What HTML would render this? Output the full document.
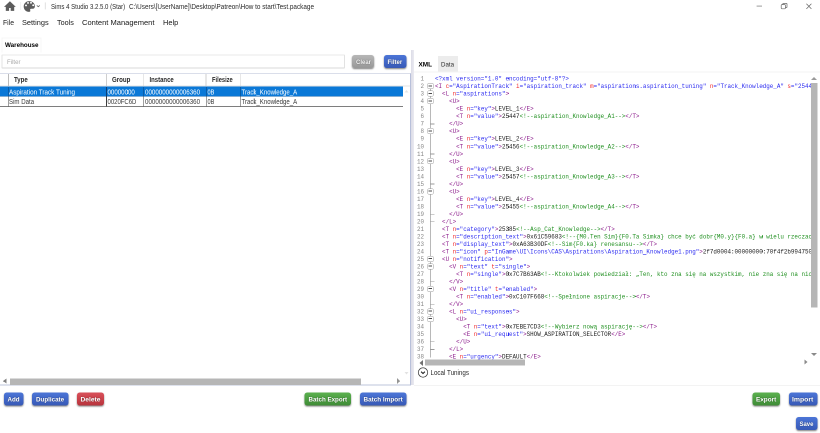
<!DOCTYPE html>
<html><head><meta charset="utf-8"><title>Sims 4 Studio</title>
<style>
*{box-sizing:border-box;margin:0;padding:0}
html,body{width:820px;height:433px;overflow:hidden;background:#fff}
body{font-family:"Liberation Sans",sans-serif;color:#111;position:relative;font-size:7px}
.abs{position:absolute;white-space:nowrap}
.tx{position:absolute;white-space:pre;transform-origin:0 0}
#o{position:absolute;left:0;top:0;width:1640px;height:866px;transform:scale(.5);transform-origin:0 0;will-change:transform;overflow:hidden;background:#fff}
#z{zoom:2;position:relative;width:820px;height:433px}
.inp{left:1.5px;top:54.5px;width:343.5px;height:14px;border:1px solid #e2e2e2;border-top-color:#e8e8e8;border-bottom-color:#d9d9d9;border-radius:1px;background:#fff}
.btn{position:absolute;height:13.2px;border-radius:2.6px;box-shadow:0 1px 1.6px rgba(0,0,0,.5)}
.blue{background:linear-gradient(#4c75d6,#3e63c4 65%,#3859b4);}
.green{background:linear-gradient(#5bb04f,#47983d 70%,#3f8a36);}
.red{background:linear-gradient(#d8505a,#c63d46 65%,#b5343d);}
.gray{background:linear-gradient(#b6b6b6,#a2a2a2 70%,#979797);}
.vl{position:absolute;width:1px}
.code{left:414px;top:75.18px;width:397px;height:284.52px;overflow:hidden;font-family:"Liberation Mono",monospace;font-size:5.877px;line-height:7.51px;color:#1a1a1a}
.ln{height:7.51px;position:relative;white-space:pre}
.no{position:absolute;left:0;width:10px;text-align:right;color:#858585;font-size:6.5px;transform:scaleX(.9);transform-origin:100% 0}
.cd{position:absolute;left:21px;font-size:6.6px;transform:scaleX(.8905);transform-origin:0 0}
.code b{font-weight:normal}
.d{color:#2a2af0}.t{color:#8b1a8b}.a{color:#f02828}.v{color:#2a2af0}.c{color:#1f8f1f}
.fb{position:absolute;left:427.4px;width:6px;height:6px;border:0.75px solid #989898;background:#fff;border-radius:1.2px}
.fb:after{content:"";position:absolute;left:0.6px;top:1.75px;width:3.3px;height:1px;background:#4a4a4a}
.tri{position:absolute;width:0;height:0}
</style></head><body><div id="o"><div id="z">

<!-- title bar icons -->
<svg class="abs" style="left:0;top:0" width="48" height="14" viewBox="0 0 48 14">
 <path d="M9.9 1.3 L4 6.9 L5.8 6.9 L5.8 10.9 L9.1 10.9 L9.1 8 L10.7 8 L10.7 10.9 L14.2 10.9 L14.2 6.9 L15.8 6.9 Z" fill="#5c5c5c"/>
 <path d="M29.2 1.1 C26.1 1.1 23.7 3.5 23.7 6.5 C23.7 9.6 26.1 11.9 28.9 11.9 C30.2 11.9 30.6 11.1 30.2 10.3 C29.8 9.4 30.3 8.7 31.3 8.7 L32.6 8.7 C34.1 8.7 34.9 7.7 34.9 6.2 C34.9 3.3 32.4 1.1 29.2 1.1 Z" fill="#5c5c5c"/>
 <circle cx="26" cy="5.4" r="0.95" fill="#fff"/><circle cx="28" cy="2.9" r="0.95" fill="#fff"/><circle cx="31" cy="2.8" r="0.95" fill="#fff"/><circle cx="33.2" cy="5.2" r="0.95" fill="#fff"/>
 <path d="M36.8 5.4 L38.3 6.7 L39.8 5.4" stroke="#666" stroke-width="0.8" fill="none"/>
 <path d="M20.7 2 V10" stroke="#eeeeee" stroke-width="0.8"/>
 <path d="M45.3 2.4 V9.4" stroke="#dcdcdc" stroke-width="0.9"/>
</svg>

<!-- window controls -->
<svg class="abs" style="left:750px;top:0" width="70" height="14" viewBox="0 0 70 14">
 <path d="M6.6 6.1 H12" stroke="#9a9a9a" stroke-width="1"/>
 <rect x="31.2" y="4.6" width="4.2" height="4.2" fill="none" stroke="#666" stroke-width="0.7" rx="0.8"/>
 <path d="M32.8 4.6 V3.9 Q32.8 3.4 33.4 3.4 H36.4 Q37 3.4 37 4 V7 Q37 7.6 36.4 7.6 H35.5" fill="none" stroke="#666" stroke-width="0.7"/>
 <path d="M56.4 3.7 L61.4 8.9 M61.4 3.7 L56.4 8.9" stroke="#666" stroke-width="0.7"/>
</svg>

<!-- warehouse tab outline -->
<div class="abs" style="left:1.5px;top:37.5px;width:40px;height:15px;border:1px solid #f6f6f6;border-bottom:none"></div>

<div class="abs inp"></div>
<div class="btn gray" style="left:352.2px;top:55px;width:22px"></div>
<div class="btn blue" style="left:384px;top:55px;width:22.6px"></div>

<!-- grid -->
<div class="abs" style="left:0;top:73px;width:411px;height:312.6px;border-top:1px solid #dadeea;border-right:1px solid #b8c0da;border-bottom:1px solid #bcc4da;background:#fff"></div>
<div class="abs" style="left:0;top:85.5px;width:410px;height:1px;background:#e2e2e2"></div>
<div class="vl" style="left:8.20px;top:74px;height:12px;width:0.8px;background:#bbbbbb"></div>
<div class="vl" style="left:106.10px;top:74px;height:12px;width:0.8px;background:#cfcfcf"></div>
<div class="vl" style="left:143.40px;top:74px;height:12px;width:0.8px;background:#cfcfcf"></div>
<div class="vl" style="left:205.70px;top:74px;height:12px;width:0.8px;background:#cfcfcf"></div>
<div class="vl" style="left:239.80px;top:74px;height:12px;width:0.8px;background:#cfcfcf"></div>
<div class="abs" style="left:0;top:86.3px;width:403px;height:10.2px;background:#0a78d7"></div>
<div class="abs" style="left:0;top:96.1px;width:403px;height:0.6px;background:#0b5ca8"></div>
<div class="abs" style="left:0;top:105.8px;width:403px;height:1.1px;background:#7e7e7e"></div>
<div class="vl" style="left:8.25px;top:87px;height:9.5px;width:0.7px;background:#0a3f78"></div>
<div class="vl" style="left:106.15px;top:87px;height:9.5px;width:0.7px;background:#0a3f78"></div>
<div class="vl" style="left:143.45px;top:87px;height:9.5px;width:0.7px;background:#0a3f78"></div>
<div class="vl" style="left:205.75px;top:87px;height:9.5px;width:0.7px;background:#0a3f78"></div>
<div class="vl" style="left:239.85px;top:87px;height:9.5px;width:0.7px;background:#0a3f78"></div>
<div class="vl" style="left:8.25px;top:96.5px;height:10px;width:0.7px;background:#3c3c3c"></div>
<div class="vl" style="left:106.15px;top:96.5px;height:10px;width:0.7px;background:#3c3c3c"></div>
<div class="vl" style="left:143.45px;top:96.5px;height:10px;width:0.7px;background:#3c3c3c"></div>
<div class="vl" style="left:205.75px;top:96.5px;height:10px;width:0.7px;background:#3c3c3c"></div>
<div class="vl" style="left:239.85px;top:96.5px;height:10px;width:0.7px;background:#3c3c3c"></div>
<div class="tri" style="left:404.5px;top:90px;border-left:2.3px solid transparent;border-right:2.3px solid transparent;border-bottom:2.6px solid #e4e4e4"></div>

<!-- left h scrollbar -->
<div class="abs" style="left:10.2px;top:378.3px;width:350.8px;height:6.5px;background:#b6b6b6"></div>
<div class="tri" style="left:2.8px;top:378.6px;border-top:2.9px solid transparent;border-bottom:2.9px solid transparent;border-right:3.5px solid #808080"></div>
<div class="tri" style="left:397px;top:378.1px;border-top:3.2px solid transparent;border-bottom:3.2px solid transparent;border-left:3.4px solid #959595"></div>
<div class="tri" style="left:404.3px;top:372px;border-left:2.4px solid transparent;border-right:2.4px solid transparent;border-top:2.8px solid #e2e2e2"></div>

<div class="btn blue" style="left:3.8px;top:392.3px;width:19.7px"></div>
<div class="btn blue" style="left:32.2px;top:392.3px;width:36.2px"></div>
<div class="btn red" style="left:77.1px;top:392.3px;width:26.9px"></div>
<div class="btn green" style="left:304.3px;top:392.3px;width:46.5px"></div>
<div class="btn blue" style="left:359.9px;top:392.3px;width:46.6px"></div>

<!-- splitter -->
<div class="abs" style="left:411.2px;top:50px;width:2.8px;height:335px;background:linear-gradient(90deg,#dcdce6,#eaeaf1)"></div>

<!-- tabs -->
<div class="abs" style="left:438px;top:56px;width:20px;height:15.5px;background:#ececec"></div>
<div class="abs" style="left:414px;top:71.3px;width:406px;height:1px;background:#f2f2f2"></div>

<!-- code -->
<div class="abs code"><div class="ln"><span class="no">1</span><span class="cd"><b class="d">&lt;?xml version=&quot;1.0&quot; encoding=&quot;utf-8&quot;?&gt;</b></span></div><div class="ln"><span class="no">2</span><span class="cd"><b class="t">&lt;I</b> <b class="a">c</b><b class="v">=&quot;AspirationTrack&quot;</b> <b class="a">i</b><b class="v">=&quot;aspiration_track&quot;</b> <b class="a">m</b><b class="v">=&quot;aspirations.aspiration_tuning&quot;</b> <b class="a">n</b><b class="v">=&quot;Track_Knowledge_A&quot;</b> <b class="a">s</b><b class="v">=&quot;25444&quot;</b><b class="t">&gt;</b></span></div><div class="ln"><span class="no">3</span><span class="cd">  <b class="t">&lt;L</b> <b class="a">n</b><b class="v">=&quot;aspirations&quot;</b><b class="t">&gt;</b></span></div><div class="ln"><span class="no">4</span><span class="cd">    <b class="t">&lt;U</b><b class="t">&gt;</b></span></div><div class="ln"><span class="no">5</span><span class="cd">      <b class="t">&lt;E</b> <b class="a">n</b><b class="v">=&quot;key&quot;</b><b class="t">&gt;</b>LEVEL_1<b class="t">&lt;/E</b><b class="t">&gt;</b></span></div><div class="ln"><span class="no">6</span><span class="cd">      <b class="t">&lt;T</b> <b class="a">n</b><b class="v">=&quot;value&quot;</b><b class="t">&gt;</b>25447<b class="c">&lt;!--aspiration_Knowledge_A1--&gt;</b><b class="t">&lt;/T</b><b class="t">&gt;</b></span></div><div class="ln"><span class="no">7</span><span class="cd">    <b class="t">&lt;/U</b><b class="t">&gt;</b></span></div><div class="ln"><span class="no">8</span><span class="cd">    <b class="t">&lt;U</b><b class="t">&gt;</b></span></div><div class="ln"><span class="no">9</span><span class="cd">      <b class="t">&lt;E</b> <b class="a">n</b><b class="v">=&quot;key&quot;</b><b class="t">&gt;</b>LEVEL_2<b class="t">&lt;/E</b><b class="t">&gt;</b></span></div><div class="ln"><span class="no">10</span><span class="cd">      <b class="t">&lt;T</b> <b class="a">n</b><b class="v">=&quot;value&quot;</b><b class="t">&gt;</b>25456<b class="c">&lt;!--aspiration_Knowledge_A2--&gt;</b><b class="t">&lt;/T</b><b class="t">&gt;</b></span></div><div class="ln"><span class="no">11</span><span class="cd">    <b class="t">&lt;/U</b><b class="t">&gt;</b></span></div><div class="ln"><span class="no">12</span><span class="cd">    <b class="t">&lt;U</b><b class="t">&gt;</b></span></div><div class="ln"><span class="no">13</span><span class="cd">      <b class="t">&lt;E</b> <b class="a">n</b><b class="v">=&quot;key&quot;</b><b class="t">&gt;</b>LEVEL_3<b class="t">&lt;/E</b><b class="t">&gt;</b></span></div><div class="ln"><span class="no">14</span><span class="cd">      <b class="t">&lt;T</b> <b class="a">n</b><b class="v">=&quot;value&quot;</b><b class="t">&gt;</b>25457<b class="c">&lt;!--aspiration_Knowledge_A3--&gt;</b><b class="t">&lt;/T</b><b class="t">&gt;</b></span></div><div class="ln"><span class="no">15</span><span class="cd">    <b class="t">&lt;/U</b><b class="t">&gt;</b></span></div><div class="ln"><span class="no">16</span><span class="cd">    <b class="t">&lt;U</b><b class="t">&gt;</b></span></div><div class="ln"><span class="no">17</span><span class="cd">      <b class="t">&lt;E</b> <b class="a">n</b><b class="v">=&quot;key&quot;</b><b class="t">&gt;</b>LEVEL_4<b class="t">&lt;/E</b><b class="t">&gt;</b></span></div><div class="ln"><span class="no">18</span><span class="cd">      <b class="t">&lt;T</b> <b class="a">n</b><b class="v">=&quot;value&quot;</b><b class="t">&gt;</b>25455<b class="c">&lt;!--aspiration_Knowledge_A4--&gt;</b><b class="t">&lt;/T</b><b class="t">&gt;</b></span></div><div class="ln"><span class="no">19</span><span class="cd">    <b class="t">&lt;/U</b><b class="t">&gt;</b></span></div><div class="ln"><span class="no">20</span><span class="cd">  <b class="t">&lt;/L</b><b class="t">&gt;</b></span></div><div class="ln"><span class="no">21</span><span class="cd">  <b class="t">&lt;T</b> <b class="a">n</b><b class="v">=&quot;category&quot;</b><b class="t">&gt;</b>25385<b class="c">&lt;!--Asp_Cat_Knowledge--&gt;</b><b class="t">&lt;/T</b><b class="t">&gt;</b></span></div><div class="ln"><span class="no">22</span><span class="cd">  <b class="t">&lt;T</b> <b class="a">n</b><b class="v">=&quot;description_text&quot;</b><b class="t">&gt;</b>0x61C59683<b class="c">&lt;!--{M0.Ten Sim}{F0.Ta Simka} chce być dobr{M0.y}{F0.a} w wielu rzeczach.--&gt;</b><b class="t">&lt;/T</b><b class="t">&gt;</b></span></div><div class="ln"><span class="no">23</span><span class="cd">  <b class="t">&lt;T</b> <b class="a">n</b><b class="v">=&quot;display_text&quot;</b><b class="t">&gt;</b>0xA63B30DF<b class="c">&lt;!--Sim{F0.ka} renesansu--&gt;</b><b class="t">&lt;/T</b><b class="t">&gt;</b></span></div><div class="ln"><span class="no">24</span><span class="cd">  <b class="t">&lt;T</b> <b class="a">n</b><b class="v">=&quot;icon&quot;</b> <b class="a">p</b><b class="v">=&quot;InGame\UI\Icons\CAS\Aspirations\Aspiration_Knowledge1.png&quot;</b><b class="t">&gt;</b>2f7d0004:00000000:70f4f2b994750a3e<b class="t">&lt;/T</b><b class="t">&gt;</b></span></div><div class="ln"><span class="no">25</span><span class="cd">  <b class="t">&lt;U</b> <b class="a">n</b><b class="v">=&quot;notification&quot;</b><b class="t">&gt;</b></span></div><div class="ln"><span class="no">26</span><span class="cd">    <b class="t">&lt;V</b> <b class="a">n</b><b class="v">=&quot;text&quot;</b> <b class="a">t</b><b class="v">=&quot;single&quot;</b><b class="t">&gt;</b></span></div><div class="ln"><span class="no">27</span><span class="cd">      <b class="t">&lt;T</b> <b class="a">n</b><b class="v">=&quot;single&quot;</b><b class="t">&gt;</b>0x7C7B63AB<b class="c">&lt;!--Ktokolwiek powiedział: „Ten, kto zna się na wszystkim, nie zna się na niczym”--&gt;</b><b class="t">&lt;/T</b><b class="t">&gt;</b></span></div><div class="ln"><span class="no">28</span><span class="cd">    <b class="t">&lt;/V</b><b class="t">&gt;</b></span></div><div class="ln"><span class="no">29</span><span class="cd">    <b class="t">&lt;V</b> <b class="a">n</b><b class="v">=&quot;title&quot;</b> <b class="a">t</b><b class="v">=&quot;enabled&quot;</b><b class="t">&gt;</b></span></div><div class="ln"><span class="no">30</span><span class="cd">      <b class="t">&lt;T</b> <b class="a">n</b><b class="v">=&quot;enabled&quot;</b><b class="t">&gt;</b>0xC107F668<b class="c">&lt;!--Spełnione aspiracje--&gt;</b><b class="t">&lt;/T</b><b class="t">&gt;</b></span></div><div class="ln"><span class="no">31</span><span class="cd">    <b class="t">&lt;/V</b><b class="t">&gt;</b></span></div><div class="ln"><span class="no">32</span><span class="cd">    <b class="t">&lt;L</b> <b class="a">n</b><b class="v">=&quot;ui_responses&quot;</b><b class="t">&gt;</b></span></div><div class="ln"><span class="no">33</span><span class="cd">      <b class="t">&lt;U</b><b class="t">&gt;</b></span></div><div class="ln"><span class="no">34</span><span class="cd">        <b class="t">&lt;T</b> <b class="a">n</b><b class="v">=&quot;text&quot;</b><b class="t">&gt;</b>0x7EBE7CD3<b class="c">&lt;!--Wybierz nową aspirację--&gt;</b><b class="t">&lt;/T</b><b class="t">&gt;</b></span></div><div class="ln"><span class="no">35</span><span class="cd">        <b class="t">&lt;E</b> <b class="a">n</b><b class="v">=&quot;ui_request&quot;</b><b class="t">&gt;</b>SHOW_ASPIRATION_SELECTOR<b class="t">&lt;/E</b><b class="t">&gt;</b></span></div><div class="ln"><span class="no">36</span><span class="cd">      <b class="t">&lt;/U</b><b class="t">&gt;</b></span></div><div class="ln"><span class="no">37</span><span class="cd">    <b class="t">&lt;/L</b><b class="t">&gt;</b></span></div><div class="ln"><span class="no">38</span><span class="cd">    <b class="t">&lt;E</b> <b class="a">n</b><b class="v">=&quot;urgency&quot;</b><b class="t">&gt;</b>DEFAULT<b class="t">&lt;/E</b><b class="t">&gt;</b></span></div></div>
<div style="position:absolute;left:430px;top:85.01px;width:0.8px;height:272.36px;background:#b8b8b8"></div><div style="position:absolute;left:430px;top:123.66px;width:4.6px;height:0.8px;background:#999"></div><div style="position:absolute;left:430px;top:153.70px;width:4.6px;height:0.8px;background:#999"></div><div style="position:absolute;left:430px;top:183.74px;width:4.6px;height:0.8px;background:#999"></div><div style="position:absolute;left:430px;top:213.78px;width:4.6px;height:0.8px;background:#999"></div><div style="position:absolute;left:430px;top:221.29px;width:4.6px;height:0.8px;background:#999"></div><div style="position:absolute;left:430px;top:281.37px;width:4.6px;height:0.8px;background:#999"></div><div style="position:absolute;left:430px;top:303.90px;width:4.6px;height:0.8px;background:#999"></div><div style="position:absolute;left:430px;top:341.45px;width:4.6px;height:0.8px;background:#999"></div><div style="position:absolute;left:430px;top:348.96px;width:4.6px;height:0.8px;background:#999"></div><div class="fb" style="top:83.11px"></div><div class="fb" style="top:90.62px"></div><div class="fb" style="top:98.13px"></div><div class="fb" style="top:128.17px"></div><div class="fb" style="top:158.21px"></div><div class="fb" style="top:188.25px"></div><div class="fb" style="top:255.84px"></div><div class="fb" style="top:263.35px"></div><div class="fb" style="top:285.88px"></div><div class="fb" style="top:308.41px"></div><div class="fb" style="top:315.92px"></div>

<!-- right scrollbars -->
<div class="abs" style="left:811px;top:82.8px;width:6.3px;height:224.6px;background:#b6b6b6"></div>
<div class="tri" style="left:811.2px;top:77.2px;border-left:3px solid transparent;border-right:3px solid transparent;border-bottom:3.2px solid #9a9a9a"></div>
<div class="tri" style="left:811.2px;top:353px;border-left:3px solid transparent;border-right:3px solid transparent;border-top:3.2px solid #8a8a8a"></div>
<div class="abs" style="left:414px;top:359.7px;width:397px;height:6.4px;background:#fff"></div>
<div class="abs" style="left:425.2px;top:359.7px;width:99.7px;height:6px;background:#b6b6b6"></div>
<div class="tri" style="left:419.4px;top:359.8px;border-top:3px solid transparent;border-bottom:3px solid transparent;border-right:3.6px solid #707070"></div>
<div class="tri" style="left:804.7px;top:359.6px;border-top:2.9px solid transparent;border-bottom:2.9px solid transparent;border-left:3.3px solid #8a8a8a"></div>

<!-- local tunings -->
<svg class="abs" style="left:417px;top:366.4px" width="12" height="12" viewBox="0 0 12 12"><circle cx="6" cy="6" r="4.7" fill="#fff" stroke="#3a3a3a" stroke-width="0.75"/><path d="M4.1 5.2 L6 7 L7.9 5.2" fill="none" stroke="#222" stroke-width="1.1"/></svg>
<div class="abs" style="left:414px;top:385px;width:406px;height:1px;background:#f3f3f3"></div>

<div class="btn green" style="left:752.7px;top:392.5px;width:27.1px"></div>
<div class="btn blue" style="left:788.9px;top:392.5px;width:28.4px"></div>
<div class="btn blue" style="left:796px;top:417px;width:21.3px"></div>

<div class="tx" style="left:50.80px;top:2.5px;font-size:7.0px;line-height:8.0px;font-weight:normal;color:#2a2a2a;transform:scaleX(0.8629);">Sims 4 Studio 3.2.5.0 (Star)</div>
<div class="tx" style="left:129.00px;top:2.5px;font-size:7.0px;line-height:8.0px;font-weight:normal;color:#2a2a2a;transform:scaleX(0.9109);">C:\Users\[UserName]\Desktop\Patreon\How to start\Test.package</div>
<div class="tx" style="left:3.00px;top:18.0px;font-size:7.7px;line-height:8.5px;font-weight:normal;color:#1a1a1a;transform:scaleX(0.8878);">File</div>
<div class="tx" style="left:22.20px;top:18.0px;font-size:7.7px;line-height:8.5px;font-weight:normal;color:#1a1a1a;transform:scaleX(0.9575);">Settings</div>
<div class="tx" style="left:57.00px;top:18.0px;font-size:7.7px;line-height:8.5px;font-weight:normal;color:#1a1a1a;transform:scaleX(0.9358);">Tools</div>
<div class="tx" style="left:82.00px;top:18.0px;font-size:7.7px;line-height:8.5px;font-weight:normal;color:#1a1a1a;transform:scaleX(0.9792);">Content Management</div>
<div class="tx" style="left:162.80px;top:18.0px;font-size:7.7px;line-height:8.5px;font-weight:normal;color:#1a1a1a;transform:scaleX(0.9613);">Help</div>
<div class="tx" style="left:5.00px;top:41.0px;font-size:6.8px;line-height:7.5px;font-weight:bold;color:#000;transform:scaleX(0.9206);">Warehouse</div>
<div class="tx" style="left:7.00px;top:58.0px;font-size:6.4px;line-height:7.5px;font-weight:normal;color:#a8a8a8;transform:scaleX(0.9505);">Filter</div>
<div class="tx" style="left:14.10px;top:76.0px;font-size:6.9px;line-height:7.5px;font-weight:bold;color:#2a2a2a;transform:scaleX(0.8794);">Type</div>
<div class="tx" style="left:111.80px;top:76.0px;font-size:6.9px;line-height:7.5px;font-weight:bold;color:#2a2a2a;transform:scaleX(0.8901);">Group</div>
<div class="tx" style="left:149.60px;top:76.0px;font-size:6.9px;line-height:7.5px;font-weight:bold;color:#2a2a2a;transform:scaleX(0.8653);">Instance</div>
<div class="tx" style="left:211.80px;top:76.0px;font-size:6.9px;line-height:7.5px;font-weight:bold;color:#2a2a2a;transform:scaleX(0.8311);">Filesize</div>
<div class="tx" style="left:9.10px;top:88.5px;font-size:6.9px;line-height:7.5px;font-weight:normal;color:#fff;transform:scaleX(0.9165);">Aspiration Track Tuning</div>
<div class="tx" style="left:107.30px;top:88.5px;font-size:6.9px;line-height:7.5px;font-weight:normal;color:#fff;transform:scaleX(0.8901);">00000000</div>
<div class="tx" style="left:145.20px;top:88.5px;font-size:6.9px;line-height:7.5px;font-weight:normal;color:#fff;transform:scaleX(0.8968);">0000000000006360</div>
<div class="tx" style="left:207.30px;top:88.5px;font-size:6.9px;line-height:7.5px;font-weight:normal;color:#fff;transform:scaleX(0.8059);">0B</div>
<div class="tx" style="left:241.30px;top:88.5px;font-size:6.9px;line-height:7.5px;font-weight:normal;color:#fff;transform:scaleX(0.8780);">Track_Knowledge_A</div>
<div class="tx" style="left:9.10px;top:98.0px;font-size:6.9px;line-height:7.5px;font-weight:normal;color:#3a3a3a;transform:scaleX(0.8856);">Sim Data</div>
<div class="tx" style="left:107.30px;top:98.0px;font-size:6.9px;line-height:7.5px;font-weight:normal;color:#3a3a3a;transform:scaleX(0.8641);">0020FC6D</div>
<div class="tx" style="left:145.20px;top:98.0px;font-size:6.9px;line-height:7.5px;font-weight:normal;color:#3a3a3a;transform:scaleX(0.8968);">0000000000006360</div>
<div class="tx" style="left:207.30px;top:98.0px;font-size:6.9px;line-height:7.5px;font-weight:normal;color:#3a3a3a;transform:scaleX(0.8059);">0B</div>
<div class="tx" style="left:241.30px;top:98.0px;font-size:6.9px;line-height:7.5px;font-weight:normal;color:#3a3a3a;transform:scaleX(0.8780);">Track_Knowledge_A</div>
<div class="tx" style="left:418.30px;top:60.5px;font-size:6.8px;line-height:7.5px;font-weight:bold;color:#000;transform:scaleX(0.9402);">XML</div>
<div class="tx" style="left:441.00px;top:60.5px;font-size:6.8px;line-height:7.5px;font-weight:normal;color:#2a2a2a;transform:scaleX(0.9053);">Data</div>
<div class="tx" style="left:430.30px;top:369.0px;font-size:6.9px;line-height:7.5px;font-weight:normal;color:#2a2a2a;transform:scaleX(0.9029);">Local Tunings</div>
<div class="tx" style="left:356.00px;top:58.0px;font-size:6.6px;line-height:7.5px;font-weight:bold;color:#f4f4f4;transform:scaleX(0.9091);text-shadow:0 0 1.2px rgba(0,0,0,.55)">Clear</div>
<div class="tx" style="left:387.50px;top:58.0px;font-size:6.6px;line-height:7.5px;font-weight:bold;color:#fff;transform:scaleX(0.9116);text-shadow:0 0 1.2px rgba(0,0,0,.55)">Filter</div>
<div class="tx" style="left:7.40px;top:395.5px;font-size:6.6px;line-height:7.5px;font-weight:bold;color:#fff;transform:scaleX(0.9432);text-shadow:0 0 1.2px rgba(0,0,0,.55)">Add</div>
<div class="tx" style="left:36.00px;top:395.5px;font-size:6.6px;line-height:7.5px;font-weight:bold;color:#fff;transform:scaleX(0.9465);text-shadow:0 0 1.2px rgba(0,0,0,.55)">Duplicate</div>
<div class="tx" style="left:80.50px;top:395.5px;font-size:6.6px;line-height:7.5px;font-weight:bold;color:#fff;transform:scaleX(1.0052);text-shadow:0 0 1.2px rgba(0,0,0,.55)">Delete</div>
<div class="tx" style="left:308.40px;top:395.5px;font-size:6.6px;line-height:7.5px;font-weight:bold;color:#fff;transform:scaleX(0.9404);text-shadow:0 0 1.2px rgba(0,0,0,.55)">Batch Export</div>
<div class="tx" style="left:363.40px;top:395.5px;font-size:6.6px;line-height:7.5px;font-weight:bold;color:#fff;transform:scaleX(0.9638);text-shadow:0 0 1.2px rgba(0,0,0,.55)">Batch Import</div>
<div class="tx" style="left:756.20px;top:395.5px;font-size:6.6px;line-height:7.5px;font-weight:bold;color:#fff;transform:scaleX(0.9669);text-shadow:0 0 1.2px rgba(0,0,0,.55)">Export</div>
<div class="tx" style="left:792.00px;top:395.5px;font-size:6.6px;line-height:7.5px;font-weight:bold;color:#fff;transform:scaleX(1.0382);text-shadow:0 0 1.2px rgba(0,0,0,.55)">Import</div>
<div class="tx" style="left:799.40px;top:420.0px;font-size:6.6px;line-height:7.5px;font-weight:bold;color:#fff;transform:scaleX(0.9022);text-shadow:0 0 1.2px rgba(0,0,0,.55)">Save</div>

</div></div></body></html>
